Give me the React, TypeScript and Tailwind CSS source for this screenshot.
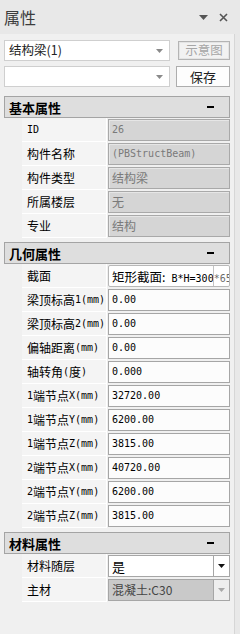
import type { ReactNode } from 'react'

const cjkFont = "font-['Noto_Sans_CJK_SC',sans-serif]"

// SimSun-like rendering: CJK at 12px, ASCII as half-width 6px mono
const Mixed = ({ text, cjkSize = 'text-[12px]' }: { text: string; cjkSize?: string }) => {
  const parts = text.match(/[\x00-\x7f]+|[^\x00-\x7f]+/g) ?? []
  return (
    <>
      {parts.map((p, i) =>
        /^[\x00-\x7f]+$/.test(p) ? (
          <span key={i} className="whitespace-pre font-['DejaVu_Sans_Mono',monospace] text-[10px]">
            {p}
          </span>
        ) : (
          <span key={i} className={`${cjkFont} ${cjkSize}`}>
            {p}
          </span>
        ),
      )}
    </>
  )
}

const SmallArrow = ({ color = '#8a8a8a' }: { color?: string }) => (
  <svg width="7" height="4" viewBox="0 0 7 4">
    <path d="M0 0h7L3.5 4z" fill={color} />
  </svg>
)

const SectionHeader = ({ title }: { title: string }) => (
  <div className="flex h-[22px] w-[226px] items-center justify-between border border-[#a4a4a4] bg-[#dedede] pl-[4px] pr-[15px]">
    <span className={`${cjkFont} text-[13px] font-bold leading-none text-black`}>{title}</span>
    <div className="h-[2px] w-[7px] bg-black" />
  </div>
)

type RowProps = { label: string; children: ReactNode }

const Row = ({ label, children }: RowProps) => (
  <div className="flex h-[24px]">
    <div className="w-[18px]" />
    <div className="flex w-[85px] items-center border-b border-r border-white bg-[#f4f4f4] pl-[5px] leading-none text-black">
      <Mixed text={label} />
    </div>
    <div className="ml-[1px] mt-[1px] h-[22px] w-[122px]">{children}</div>
  </div>
)

const ReadOnlyBox = ({ value }: { value: string }) => (
  <div className="flex h-full w-full items-center overflow-hidden border border-[#a9a9a9] bg-[#d5d5d5] pl-[3px] leading-none text-[#7a7a7a] shadow-[inset_1px_1px_0_#e6e6e6]">
    <Mixed text={value} />
  </div>
)

const EditBox = ({ value }: { value: string }) => (
  <div className="flex h-full w-full items-center overflow-hidden border border-[#a6a6a6] bg-[#fcfcfc] pl-[3px] leading-none text-black">
    <Mixed text={value} />
  </div>
)

const basicRows = [
  { label: 'ID', value: '26' },
  { label: '构件名称', value: '(PBStructBeam)' },
  { label: '构件类型', value: '结构梁' },
  { label: '所属楼层', value: '无' },
  { label: '专业', value: '结构' },
]

const geoRows = [
  { label: '梁顶标高1(mm)', value: '0.00' },
  { label: '梁顶标高2(mm)', value: '0.00' },
  { label: '偏轴距离(mm)', value: '0.00' },
  { label: '轴转角(度)', value: '0.000' },
  { label: '1端节点X(mm)', value: '32720.00' },
  { label: '1端节点Y(mm)', value: '6200.00' },
  { label: '1端节点Z(mm)', value: '3815.00' },
  { label: '2端节点X(mm)', value: '40720.00' },
  { label: '2端节点Y(mm)', value: '6200.00' },
  { label: '2端节点Z(mm)', value: '3815.00' },
]

export default function App() {
  return (
    <div className="flex h-[634px] w-[240px] flex-col bg-[#e8e8e8]">
      {/* title bar */}
      <div className="flex h-[34px] items-center justify-between pl-[4px] pr-[12px]">
        <span className={`${cjkFont} text-[16px] leading-none text-[#3c3c3c]`}>属性</span>
        <div className="flex items-center gap-[11px] pt-[1px]">
          <svg width="9" height="5" viewBox="0 0 9 5">
            <path d="M0 0h9L4.5 5z" fill="#555" />
          </svg>
          <svg width="9" height="9" viewBox="0 0 9 9">
            <path d="M1 1l7 7M8 1l-7 7" stroke="#555" strokeWidth="1.6" />
          </svg>
        </div>
      </div>

      <div className="flex flex-1">
        <div className="flex w-[235px] flex-col border-r border-[#d6d6d6] bg-[#f0f0f0] pl-[4px]">
          {/* combos */}
          <div className="mt-[6px] flex items-center">
            <div className="flex h-[21px] w-[166px] items-center justify-between border border-[#cfcfcf] bg-white pl-[4px] pr-[6px]">
              <span className={`${cjkFont} text-[12.5px] leading-none text-[#222]`}>结构梁(1)</span>
              <SmallArrow />
            </div>
            <div className="ml-[8px] flex h-[19px] w-[52px] items-center justify-center border border-[#b4b4b4] bg-[#f2f2f2] shadow-[inset_0_0_0_1px_#e4e4e4]">
              <span className={`${cjkFont} text-[12.5px] leading-none text-[#a6a6a6]`}>示意图</span>
            </div>
          </div>
          <div className="mt-[5px] flex items-center">
            <div className="flex h-[21px] w-[166px] items-center justify-end border border-[#cfcfcf] bg-white pr-[6px]">
              <SmallArrow />
            </div>
            <div className="ml-[6px] flex h-[21px] w-[54px] items-center justify-center border border-[#adadad] bg-[#fdfdfd]">
              <span className={`${cjkFont} text-[13px] leading-none text-[#222]`}>保存</span>
            </div>
          </div>

          {/* 基本属性 */}
          <div className="mt-[9px]">
            <SectionHeader title="基本属性" />
            {basicRows.map((r) => (
              <Row key={r.label} label={r.label}>
                <ReadOnlyBox value={r.value} />
              </Row>
            ))}
          </div>

          {/* 几何属性 */}
          <div className="mt-[4px]">
            <SectionHeader title="几何属性" />
            <Row label="截面">
              <div className="relative flex h-full w-full items-center overflow-hidden rounded-[2px] border border-[#b8b8b8] bg-white pl-[3px] leading-none text-black">
                <span className="whitespace-nowrap">
                  <span className={`${cjkFont} text-[12.5px]`}>矩形截面:</span>
                  <span className="font-['DejaVu_Sans_Mono',monospace] text-[10px]"> B*H=300*650</span>
                </span>
                <div className="absolute right-0 top-0 h-full w-[16px] border-l border-[#c4c4c4] bg-white/40" />
              </div>
            </Row>
            {geoRows.map((r) => (
              <Row key={r.label} label={r.label}>
                <EditBox value={r.value} />
              </Row>
            ))}
          </div>

          {/* 材料属性 */}
          <div className="mt-[4px]">
            <SectionHeader title="材料属性" />
            <Row label="材料随层">
              <div className="flex h-full w-full items-center border border-[#a6a6a6] bg-white leading-none">
                <span className={`${cjkFont} flex-1 pl-[3px] text-[13px] text-black`}>是</span>
                <div className="flex h-full w-[16px] items-center justify-center border-l border-[#a6a6a6]">
                  <SmallArrow color="#111" />
                </div>
              </div>
            </Row>
            <Row label="主材">
              <div className="flex h-full w-full items-center border border-[#a6a6a6] bg-[#c9c9c9] leading-none">
                <span className={`${cjkFont} flex-1 pl-[3px] text-[12px] text-[#444]`}>混凝土:C30</span>
                <div className="flex h-full w-[16px] items-center justify-center border-l border-[#a6a6a6] bg-[#eeeeee]">
                  <SmallArrow color="#a8a8a8" />
                </div>
              </div>
            </Row>
          </div>
        </div>
      </div>
    </div>
  )
}
